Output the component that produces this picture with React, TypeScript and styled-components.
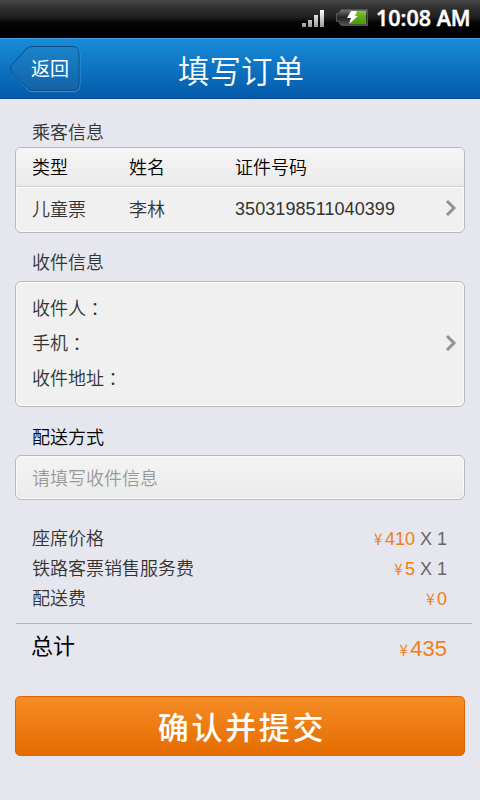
import React from "react";
import styled, { createGlobalStyle } from "styled-components";

const GlobalStyle = createGlobalStyle`
  * { box-sizing: border-box; }
  body {
    margin: 0;
    background: #e5e6ee;
    font-family: "Liberation Sans", "Noto Sans CJK SC", sans-serif;
    font-size: 18px;
    color: #333;
  }
`;

const Screen = styled.div`
  width: 480px;
  height: 800px;
  overflow: hidden;
  display: flex;
  flex-direction: column;
  background: #e5e6ee;
`;

const StatusBar = styled.div`
  height: 38px;
  flex: none;
  display: flex;
  align-items: center;
  justify-content: flex-end;
  padding: 0 9px 2px 0;
  background: linear-gradient(#494949 0, #303030 8px, #202020 17px, #080808 22px, #000 29px);
`;

const SignalIcon = styled.svg`
  width: 24px;
  height: 20px;
  margin-right: 11px;
`;

const BatteryIcon = styled.svg`
  width: 34px;
  height: 20px;
  margin-right: 6px;
`;

const Clock = styled.time`
  font: 650 21.5px/34px "Open Sans", "Noto Sans", sans-serif;
  color: #fff;
  width: 95px;
  white-space: nowrap;
  -webkit-text-stroke: 0.5px #fff;
`;

const Header = styled.header`
  height: 61px;
  flex: none;
  display: grid;
  grid-template-columns: 90px 1fr 90px;
  background: linear-gradient(#188cd9, #0459aa);
  border-top: 1px solid #3d9fdf;
  border-bottom: 1px solid #064d91;
`;

const BackButton = styled.button`
  width: 72px;
  height: 47px;
  margin: 7px 0 0 10px;
  padding: 0;
  border: 0;
  background: none;
  display: grid;
  color: #fff;
  font: 19px/44px "Noto Sans CJK SC", sans-serif;

  > * { grid-area: 1 / 1; }
`;

const BackLabel = styled.span`
  text-align: left;
  padding-left: 21px;
`;

const Title = styled.h1`
  margin: 0;
  text-align: center;
  color: #fff;
  font: 350 31.5px/60px "Noto Sans CJK SC", sans-serif;
  padding-left: 2px;
`;

const Main = styled.main`
  display: flex;
  flex-direction: column;
  padding: 17px 15px 0;
`;

const SectionTitle = styled.h2<{ $strong?: boolean; $above: number; $below: number }>`
  margin: ${(p) => p.$above}px 0 ${(p) => p.$below}px 17px;
  height: 30px;
  font: 350 18px/30px "Noto Sans CJK SC", sans-serif;
  color: ${(p) => (p.$strong ? "#000" : "#333")};
`;

const Card = styled.section<{ $height: number; $shaded?: boolean }>`
  width: 450px;
  height: ${(p) => p.$height}px;
  border: 1px solid #b8b9bf;
  border-radius: 6px;
  overflow: hidden;
  box-shadow: inset 0 0 0 1px #fafafa;
  background: ${(p) => (p.$shaded ? "linear-gradient(#f4f4f4, #ebebeb)" : "#f0f0f0")};
`;

const PassengerRow = styled.div<{ $head?: boolean }>`
  display: grid;
  grid-template-columns: 97px 106px 1fr 12px;
  align-items: center;
  height: ${(p) => (p.$head ? 39 : 43)}px;
  padding: 0 7px 2px 16px;
  font-weight: 350;
  color: ${(p) => (p.$head ? "#000" : "#333")};
  background: ${(p) => (p.$head ? "linear-gradient(#f5f5f5, #ebebeb)" : "none")};
  border-bottom: ${(p) => (p.$head ? "1px solid #cfcfcf" : "0")};
  border-top: ${(p) => (p.$head ? "0" : "1px solid #fff")};
`;

const DocumentNumber = styled.span`
  letter-spacing: 0.07px;
  padding-top: 2px;
`;

const Chevron = styled.svg`
  width: 12px;
  height: 18px;
  flex: none;
`;

const Recipient = styled.div`
  height: 124px;
  padding: 8px 7px 0 16px;
  display: flex;
  justify-content: space-between;

  ${Chevron} { margin-top: 44px; }
`;

const Fields = styled.div`
  font: 350 18px/35px "Noto Sans CJK SC", sans-serif;
`;

const Field = styled.div`
  height: 35px;
`;

const Colon = styled.span`
  font-family: "Noto Sans CJK TC", sans-serif;
  font-weight: 350;
  line-height: 1;
  vertical-align: -1px;
`;

const Placeholder = styled.div`
  padding-left: 16px;
  font: 350 18px/42px "Noto Sans CJK SC", sans-serif;
  color: #999;
`;

const Prices = styled.div`
  margin-top: 24px;
  padding: 0 18px 9px 17px;
`;

const PriceRow = styled.div<{ $total?: boolean }>`
  display: flex;
  justify-content: space-between;
  height: ${(p) => (p.$total ? 44 : 30)}px;
  line-height: ${(p) => (p.$total ? 46 : 31)}px;
  font-size: ${(p) => (p.$total ? 22 : 18)}px;
  font-weight: ${(p) => (p.$total ? 400 : 350)};
  color: ${(p) => (p.$total ? "#000" : "#333")};
`;

const Amount = styled.span<{ $down?: number }>`
  color: #ef7f16;
  font-weight: 400;
  white-space: pre;
  padding-top: ${(p) => p.$down || 0}px;
`;

const Yen = styled.span`
  font: 15px/1 "Noto Sans CJK SC", sans-serif;
  margin-right: 2.5px;
`;

const Count = styled.span`
  color: #666;
`;

const Total = styled.div`
  width: 456px;
  margin-left: 1px;
  padding: 0 25px 0 15px;
  border-top: 1px solid #b5b5b9;
  height: 73px;
`;

const Submit = styled.button`
  width: 450px;
  height: 60px;
  padding: 0 0 0 4px;
  border: 1px solid #dc6503;
  border-radius: 5px;
  background: linear-gradient(#f58c25, #e56c00);
  color: #fff;
  font: 500 31px/58px "Noto Sans CJK SC", sans-serif;
  letter-spacing: 2.7px;
`;

const Arrow = () => (
  <Chevron viewBox="0 0 12 18">
    <path d="M2 2l7 7-7 7" fill="none" stroke="#929292" strokeWidth="3" />
  </Chevron>
);

const charges = [
  { label: "座席价格", amount: 410, count: 1 },
  { label: "铁路客票销售服务费", amount: 5, count: 1 },
  { label: "配送费", amount: 0 },
];

const Price = ({ value, count, down }: { value: number; count?: number; down?: number }) => (
  <Amount $down={down}>
    <Yen>¥</Yen>
    {value}
    {count && <Count> X {count}</Count>}
  </Amount>
);

export default function App() {
  return (
    <Screen>
      <GlobalStyle />
      <StatusBar>
        <SignalIcon viewBox="0 0 24 20">
          <defs>
            <linearGradient id="bars" x2="0" y2="1">
              <stop stopColor="#fff" />
              <stop offset="1" stopColor="#999" />
            </linearGradient>
          </defs>
          <path fill="url(#bars)" d="M1 15h4v4H1zM7 12h4v7H7zM13 7h4v12h-4zM19 2h4v17h-4z" />
        </SignalIcon>
        <BatteryIcon viewBox="0 0 34 20">
          <defs>
            <linearGradient id="shell" x2="0" y2="1">
              <stop stopColor="#777" />
              <stop offset=".5" stopColor="#222" />
              <stop offset="1" stopColor="#555" />
            </linearGradient>
            <linearGradient id="charge" x2="0" y2="1">
              <stop stopColor="#8bc53f" />
              <stop offset=".45" stopColor="#5cae14" />
              <stop offset="1" stopColor="#499b05" />
            </linearGradient>
          </defs>
          <path fill="url(#shell)" stroke="#555" d="M5.500 1.500h26v16h-26l-2-2v-2h-3v-8h3v-2z" />
          <path fill="url(#charge)" d="M16 3h14v13H14z" />
          <path fill="#fff" d="M15 3h6l-2 5h3L13 16l2-6h-4z" />
        </BatteryIcon>
        <Clock>10:08 AM</Clock>
      </StatusBar>
      <Header>
        <BackButton>
          <svg width="72" height="47" viewBox="0 0 72 47">
            <defs>
              <linearGradient id="back" x2="0" y2="1">
                <stop stopColor="#1b83cb" />
                <stop offset="1" stopColor="#1163a8" />
              </linearGradient>
            </defs>
            <path
              d="M22 1.500h41q7 0 7 7v30q0 7-7 7H22q-3 0-5-2.500L2 26q-2-3 0-6L16 4q2.500-2.500 6-2.500z"
              fill="none"
              stroke="#52a0d8"
              strokeOpacity=".75"
            />
            <path
              d="M22 .5h40q7 0 7 7v30q0 7-7 7H22q-3 0-5-2.500L1.500 25.500q-2-3 0-6L16 3q2.500-2.500 6-2.500z"
              fill="url(#back)"
              stroke="#0b4d85"
            />
          </svg>
          <BackLabel>返回</BackLabel>
        </BackButton>
        <Title>填写订单</Title>
      </Header>
      <Main>
        <SectionTitle $above={0} $below={1}>乘客信息</SectionTitle>
        <Card $height={86}>
          <PassengerRow $head>
            <span>类型</span>
            <span>姓名</span>
            <span>证件号码</span>
          </PassengerRow>
          <PassengerRow>
            <span>儿童票</span>
            <span>李林</span>
            <DocumentNumber>3503198511040399</DocumentNumber>
            <Arrow />
          </PassengerRow>
        </Card>
        <SectionTitle $above={13} $below={5}>收件信息</SectionTitle>
        <Card $height={126}>
          <Recipient>
            <Fields>
              {["收件人", "手机", "收件地址"].map((label) => (
                <Field key={label}>
                  {label}
                  <Colon lang="zh-TW">：</Colon>
                </Field>
              ))}
            </Fields>
            <Arrow />
          </Recipient>
        </Card>
        <SectionTitle $above={14} $below={4} $strong>配送方式</SectionTitle>
        <Card $height={45} $shaded>
          <Placeholder>请填写收件信息</Placeholder>
        </Card>
        <Prices>
          {charges.map((c) => (
            <PriceRow key={c.label}>
              <span>{c.label}</span>
              <Price value={c.amount} count={c.count} />
            </PriceRow>
          ))}
        </Prices>
        <Total>
          <PriceRow $total>
            <span>总计</span>
            <Price value={435} down={2} />
          </PriceRow>
        </Total>
        <Submit>确认并提交</Submit>
      </Main>
    </Screen>
  );
}
